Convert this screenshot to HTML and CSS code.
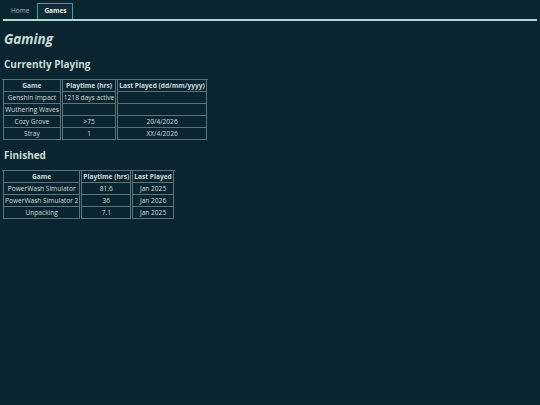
FILE: index.html
```html
<!DOCTYPE html>
<html>
<head>
<meta charset="utf-8">
<link rel="stylesheet" href="styles.css">
</head>
<body>
<nav class="tabs">
  <a class="tab">Home</a>
  <a class="tab active">Games</a>
</nav>
<main class="content">
  <h1 class="title">Gaming</h1>
  <h2 class="section">Currently Playing</h2>
  <table class="games">
    <tr><th>Game</th><th>Playtime (hrs)</th><th>Last Played (dd/mm/yyyy)</th></tr>
    <tr><td>Genshin Impact</td><td>1218 days active</td><td></td></tr>
    <tr><td>Wuthering Waves</td><td></td><td></td></tr>
    <tr><td>Cozy Grove</td><td>&gt;75</td><td>20/4/2026</td></tr>
    <tr><td>Stray</td><td>1</td><td>XX/4/2026</td></tr>
  </table>
  <h2 class="section">Finished</h2>
  <table class="games">
    <tr><th>Game</th><th>Playtime (hrs)</th><th>Last Played</th></tr>
    <tr><td>PowerWash Simulator</td><td>81.6</td><td>Jan 2025</td></tr>
    <tr><td>PowerWash Simulator 2</td><td>36</td><td>Jan 2026</td></tr>
    <tr><td>Unpacking</td><td>7.1</td><td>Jan 2025</td></tr>
  </table>
</main>
</body>
</html>
```
FILE: styles.css
```css
html, body {
  margin: 0;
  padding: 0;
  background: #0b2530;
  color: #c9dcd6;
  font-family: "Open Sans", "Noto Sans", sans-serif;
}
body {
  padding: 3px 3px;
}
.tabs {
  display: flex;
  gap: 1px;
  border-bottom: 2px solid #b5d8cf;
  padding-left: 1px;
}
.tab {
  font-size: 6.5px;
  line-height: 8px;
  padding: 3px 6px 4px;
  color: #aab9b6;
  border: 1px solid transparent;
  border-bottom: none;
}
.tab.active {
  color: #e6eee9;
  font-weight: bold;
  border: 1px solid #2aa8a6;
  border-bottom: none;
  background: #0d2c36;
}
.content {
  padding: 0 1px;
}
.title {
  font-size: 13.5px;
  line-height: 18px;
  font-style: italic;
  font-weight: bold;
  margin: 9px 0 9px;
  color: #c9dcd6;
}
.section {
  font-size: 10px;
  line-height: 14px;
  font-weight: bold;
  margin: 0 0 8px;
  color: #c9dcd6;
}
.games {
  border-collapse: separate;
  border-spacing: 1px 0;
  font-size: 6.6px;
  margin: 0 0 8px -2px;
  border-top: 1px solid #5b7478;
}
.games th, .games td {
  border: 1px solid #5b7478;
  border-top: none;
  padding: 1px 1px;
  height: 9px;
  text-align: center;
  color: #cfdad7;
  line-height: 9px;
  white-space: nowrap;
}
.games th {
  font-weight: bold;
}
```
